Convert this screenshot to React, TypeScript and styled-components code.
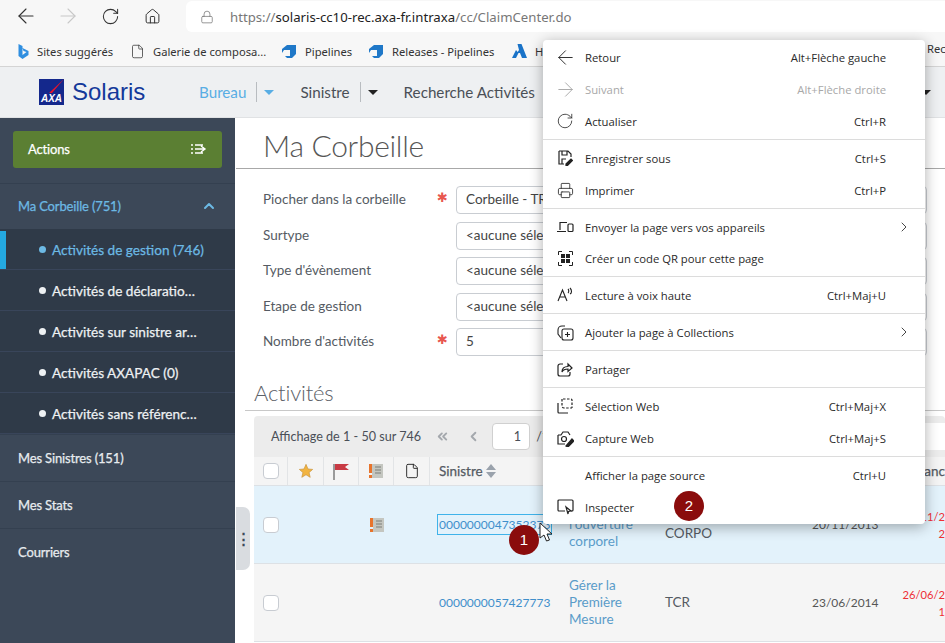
import React from 'react';
import styled, { createGlobalStyle } from 'styled-components';
import { ArrowLeft, ArrowRight, RotateCw, Home, Lock, ChevronUp, ChevronRight, ChevronsLeft, ChevronLeft, File, Printer } from 'lucide-react';

const GlobalStyle = createGlobalStyle`
  html, body { margin: 0; padding: 0; height: 643px; overflow: hidden; background: #fff; }
  * { box-sizing: border-box; }
`;

const Page = styled.div`
  position: relative;
  width: 945px;
  height: 643px;
  overflow: hidden;
  font-family: "Noto Sans", sans-serif;
`;

const Toolbar = styled.div`
  height: 36px;
  background: #f7f7f7;
  display: flex;
  align-items: flex-start;
  padding-left: 5px;
  color: #222;
`;

const ToolButton = styled.div<{ $off?: boolean }>`
  width: 42px;
  height: 32px;
  display: flex;
  align-items: center;
  justify-content: center;
  color: ${p => (p.$off ? '#c8c8c8' : '#333')};
`;

const Address = styled.div`
  flex: 1;
  margin: 1px 0 0 13px;
  height: 31px;
  background: #fff;
  border-radius: 6px 0 0 6px;
  display: flex;
  align-items: center;
  gap: 16px;
  padding-left: 14px;
  font-size: 13.2px;
  color: #777;
`;

const Strong = styled.span`
  color: #222;
`;

const Bookmarks = styled.div`
  height: 31px;
  background: #f7f7f7;
  border-bottom: 1px solid #d4d4d4;
  display: flex;
  align-items: center;
  padding-left: 16px;
  font-size: 11.2px;
  color: #333;
  white-space: nowrap;
`;

const Bookmark = styled.div<{ $w: number }>`
  width: ${p => p.$w}px;
  display: flex;
  align-items: center;
  gap: 8px;
`;

const TopNav = styled.div`
  height: 51px;
  background: #eef0f2;
  border-bottom: 1px solid #e0e2e4;
  display: flex;
  align-items: center;
  padding-left: 39px;
`;

const Logo = styled.div`
  width: 160px;
  display: flex;
  align-items: center;
  font-family: "Liberation Sans", sans-serif;
  font-size: 24px;
  color: #14399a;
  gap: 8px;
`;

const NavItem = styled.div<{ $active?: boolean }>`
  font-family: "Lato", sans-serif;
  font-size: 15.2px;
  color: ${p => (p.$active ? '#58ade4' : '#4a4f57')};
  display: flex;
  align-items: center;
`;

const NavCaret = styled.div<{ $active?: boolean }>`
  margin: 0 26px 0 10px;
  padding-left: 7px;
  height: 20px;
  border-left: 1px solid #b8bcc0;
  display: flex;
  align-items: center;
  &::after {
    content: '';
    border-left: 5px solid transparent;
    border-right: 5px solid transparent;
    border-top: 5px solid ${p => (p.$active ? '#58ade4' : '#222')};
  }
`;

const NavEndCaret = styled.div`
  margin: 0 14px 0 auto;
  border-left: 5px solid transparent;
  border-right: 5px solid transparent;
  border-top: 5px solid #222;
`;

const Body = styled.div`
  height: 525px;
  display: flex;
`;

const Sidebar = styled.aside`
  width: 235px;
  background: #3c4858;
  color: #e8ecef;
  font-family: "Lato", sans-serif;
  font-size: 13px;
  letter-spacing: -0.15px;
  -webkit-text-stroke: 0.25px currentColor;
  flex-shrink: 0;
  padding-top: 13px;
`;

const ActionButton = styled.div`
  margin: 0 13px 15px;
  height: 37px;
  border-radius: 3px;
  background: #5b7f33;
  color: #fff;
  display: flex;
  align-items: center;
  justify-content: space-between;
  padding: 0 15px 1px;
  font-size: 13px;
`;

const SideSection = styled.div<{ $open?: boolean }>`
  height: ${p => (p.$open ? '46px' : '47px')};
  padding: ${p => (p.$open ? '0 18px 2px' : '0 18px')};
  display: flex;
  align-items: center;
  justify-content: space-between;
  border-top: 1px solid #344050;
  color: ${p => (p.$open ? '#6cb9e4' : '#e8ecef')};
`;

const SubList = styled.div`
  background: #2f3a48;
`;

const SubItem = styled.div<{ $active?: boolean }>`
  height: 41px;
  position: relative;
  display: flex;
  align-items: center;
  gap: 6px;
  padding: 1px 0 0 39px;
  border-bottom: 1px solid #39455a;
  color: ${p => (p.$active ? '#6cb9e4' : '#eef1f3')};
  font-size: 13.6px;
  letter-spacing: 0;
  &::before {
    content: '';
    width: 7px;
    height: 7px;
    border-radius: 50%;
    background: currentColor;
  }
  &::after {
    content: '';
    display: ${p => (p.$active ? 'block' : 'none')};
    position: absolute;
    left: 0;
    top: 2px;
    bottom: 0;
    width: 6px;
    background: #24a9e1;
  }
`;

const Splitter = styled.div`
  width: 19px;
  flex-shrink: 0;
  position: relative;
`;

const Handle = styled.div`
  position: absolute;
  left: 1px;
  top: 389px;
  width: 14px;
  height: 63px;
  background: #d9dce0;
  border-radius: 0 7px 7px 0;
  color: #3c4858;
  font-size: 15px;
  line-height: 63px;
  text-align: center;
  font-weight: 700;
`;

const Main = styled.main`
  flex: 1;
  min-width: 0;
  font-family: "Lato", sans-serif;
  font-size: 13.5px;
  color: #555b63;
`;

const PageTitle = styled.div`
  height: 51px;
  margin-left: -18px;
  padding-left: 27px;
  border-bottom: 1px solid #a8a8a8;
  font-size: 30px;
  letter-spacing: -0.3px;
  font-weight: 300;
  line-height: 54px;
  color: #565656;
`;

const Form = styled.div`
  padding: 17px 0 0 9px;
  display: grid;
  row-gap: 7.5px;
`;

const FormRow = styled.div`
  display: grid;
  grid-template-columns: 170px 23px 471px;
  align-items: center;
  height: 28px;
`;

const FormLabel = styled.span`
  padding-bottom: 2px;
`;

const Required = styled.span`
  padding-left: 4px;
  color: #e8574f;
  font-family: "DejaVu Sans", sans-serif;
  font-size: 13px;
  line-height: 14px;
  margin-top: -4px;
`;

const Field = styled.div`
  height: 28px;
  border: 1px solid #c9cdd2;
  border-radius: 4px;
  padding-left: 9px;
  line-height: 25px;
  color: #444;
  background: #fff;
`;

const SectionTitle = styled.div`
  margin: 22px 0 0 -9px;
  height: 33px;
  border-bottom: 1px solid #c8c8c8;
  padding-left: 9px;
  font-size: 22px;
  letter-spacing: -0.2px;
  font-weight: 300;
  line-height: 30px;
  color: #5c6168;
`;

const TableWrap = styled.div`
  margin-top: 5px;
`;

const Pager = styled.div`
  height: 41px;
  background: #ececec;
  border-radius: 4px 4px 0 0;
  display: flex;
  align-items: center;
  padding-left: 17px;
  font-size: 12.6px;
  color: #4a4f57;
  gap: 14px;
`;

const PageIcons = styled.div`
  display: flex;
  align-items: center;
  gap: 16px;
  color: #a4a8ad;
`;

const PageInput = styled.div`
  width: 38px;
  height: 27px;
  margin-left: -3px;
  background: #fff;
  border: 1px solid #d0d0d0;
  border-radius: 4px;
  text-align: right;
  padding-right: 8px;
  line-height: 25px;
`;

const PageTotal = styled.span`
  margin-left: -8px;
`;

const PagerFill = styled.div`
  flex: 1;
  height: 27px;
  background: #fff;
`;

const GridRow = styled.div<{ $bg: string; $h: number }>`
  display: grid;
  grid-template-columns: 34px 36px 35px 35px 36px 130px 96px 147px 90px 52px;
  height: ${p => p.$h}px;
  background: ${p => p.$bg};
  border-bottom: 1px solid #dde1e5;
  align-items: center;
`;

const Cell = styled.div<{ $head?: boolean; $center?: boolean }>`
  height: ${p => (p.$head ? '100%' : 'auto')};
  display: flex;
  align-items: center;
  padding-left: ${p => (p.$center ? 0 : '9px')};
  justify-content: ${p => (p.$center ? 'center' : 'flex-start')};
  border-right: ${p => (p.$head ? '1px solid #e2e4e6' : 'none')};
  -webkit-text-stroke: ${p => (p.$head ? '0.25px currentColor' : '0')};
  line-height: 17px;
`;

const HeadEnd = styled.div`
  text-align: right;
  -webkit-text-stroke: 0.25px currentColor;
  white-space: nowrap;
`;

const Check = styled.div`
  width: 16px;
  height: 16px;
  background: #fff;
  border: 1px solid #c8ccd2;
  border-radius: 4px;
`;

const ClaimLink = styled.span<{ $focus?: boolean }>`
  color: #3f8fcb;
  font-size: 12px;
  outline: ${p => (p.$focus ? '1.5px solid #3fb3ea' : 'none')};
  outline-offset: 1px;
`;

const TaskLink = styled.span`
  color: #5a9cc9;
`;

const DateText = styled.span`
  color: #555;
  font-size: 12px;
`;

const RedDate = styled.div`
  color: #ee2f35;
  font-size: 11.2px;
  text-align: right;
  white-space: nowrap;
  line-height: 17px;
`;

const Menu = styled.div`
  position: absolute;
  left: 543px;
  top: 40px;
  width: 382px;
  height: 484px;
  background: #fff;
  border-radius: 4px;
  box-shadow: 0 3px 14px rgba(0, 0, 0, 0.32);
  padding-top: 1px;
  font-family: "Open Sans", sans-serif;
  font-size: 11.3px;
  color: #2a2a2a;
`;

const MenuRow = styled.div<{ $off?: boolean; $h?: number; $sub?: boolean }>`
  height: ${p => p.$h ?? 32}px;
  display: grid;
  grid-template-columns: 42px 1fr auto;
  align-items: center;
  padding-right: ${p => (p.$sub ? '13px' : '39px')};
  color: ${p => (p.$off ? '#a8a8a8' : '#2a2a2a')};
`;

const MenuIcon = styled.div`
  display: flex;
  justify-content: center;
  padding-left: 2px;
`;

const Divider = styled.div`
  height: 1px;
  margin: 2px 0;
  background: #dcdcdc;
`;

const Badge = styled.div<{ $x: number; $y: number }>`
  position: absolute;
  left: ${p => p.$x}px;
  top: ${p => p.$y}px;
  width: 30px;
  height: 30px;
  border-radius: 50%;
  background: #8a0c0c;
  color: #fff;
  text-align: center;
  line-height: 30px;
  font-family: "Liberation Sans", sans-serif;
  font-size: 15px;
`;

const Cursor = styled.svg`
  position: absolute;
  left: 539px;
  top: 522px;
`;

const Peek = styled.div`
  position: absolute;
  left: 927px;
  top: 41px;
  font-size: 11.2px;
  color: #333;
`;

const AxaLogo = () => (
  <svg width="25" height="26" viewBox="0 0 25 26">
    <rect width="25" height="26" fill="#14288c" />
    <path d="M25 0 L13 14 L10 14 Z" fill="#e8142c" />
    <text x="12.5" y="23" textAnchor="middle" fontFamily="Liberation Sans" fontWeight="700" fontStyle="italic" fontSize="10" fill="#fff">AXA</text>
  </svg>
);

const EdgeIcon = () => (
  <svg width="13" height="15" viewBox="0 0 12 15">
    <path d="M2 0 L6 2 L6 11 L10 8 L7 7 L6 4 L12 7 L12 11 L6 15 L2 12 Z" fill="#2f8ee0" />
  </svg>
);

const PipelineIcon = () => (
  <svg width="16" height="15" viewBox="0 0 16 15">
    <path d="M6 1 H15 V10 L11 14 H6 L4 12 H9 V6 H3 L1 9 V5 Z" fill="#1f78c8" />
  </svg>
);

const AzureIcon = () => (
  <svg width="15" height="14" viewBox="0 0 15 14">
    <path d="M5.500 0H9.500L15 14H10L8 9H5L7 6zM0 14L4 6 6.500 9 4 14z" fill="#1a73c8" />
  </svg>
);

const SideMenuIcon = () => (
  <svg width="16" height="12" viewBox="0 0 16 12" fill="none" stroke="#fff" strokeWidth="1.4">
    <path d="M0 2h2M0 6h2M0 10h2M4 2h8M4 10h8M4 6h10M10 3l4 3-4 3" />
  </svg>
);

const TaskIcon = () => (
  <svg width="14" height="16" viewBox="0 0 14 16">
    <rect x="3" y="1" width="11" height="14" fill="#c4c6c0" />
    <path d="M6 4h6M6 7h6M6 10h6" stroke="#7d7f78" />
    <rect x="0" y="1" width="3" height="9" fill="#e8742c" />
    <rect x="0" y="12" width="3" height="3" fill="#e8742c" />
  </svg>
);

const Star = () => (
  <svg width="16" height="16" viewBox="0 0 24 24" fill="#f2b440" stroke="#c8923a">
    <path d="M12 2l3 7 7 .6-5.400 4.700 1.700 7.200L12 17.600 5.700 21.500l1.700-7.200L2 9.600 9 9z" />
  </svg>
);

const Flag = () => (
  <svg width="17" height="17" viewBox="0 0 17 17">
    <rect x="0" y="1" width="2" height="16" fill="#9a9a9a" />
    <path d="M2 1 H16 L12 4 L16 7 H2 Z" fill="#c83a44" />
  </svg>
);

const SortIcon = () => (
  <svg width="10" height="14" viewBox="0 0 10 14" fill="#9aa2ac">
    <path d="M5 0l5 6H0zM5 14L0 8h10z" />
  </svg>
);

const SaveIcon = () => (
  <svg width="16" height="16" viewBox="0 0 16 16" fill="none" stroke="#222" strokeWidth="1.2">
    <path d="M2 1h9l3 3v3M2 1v13h5M5 1v4h5V1M5 14V9h4" />
    <path d="M9 14l5-5 1.500 1.500-5 5H9z" fill="#222" />
  </svg>
);

const SendIcon = () => (
  <svg width="17" height="14" viewBox="0 0 17 14" fill="none" stroke="#222" strokeWidth="1.200">
    <path d="M3 10V2.500h7M0 11.500h9" />
    <rect x="11" y="4" width="5" height="7.500" rx="1" />
  </svg>
);

const QrIcon = () => (
  <svg width="15" height="15" viewBox="0 0 15 15" fill="none" stroke="#222" strokeWidth="1">
    <path d="M.5 4V.5H4M11 .5h3.500V4M.5 11v3.500H4M11 14.500h3.500V11" />
    <g fill="#222" stroke="none">
      <rect x="3" y="3" width="4" height="4" />
      <rect x="8" y="3" width="4" height="4" />
      <rect x="3" y="8" width="4" height="4" />
      <rect x="8" y="8" width="4" height="4" />
    </g>
  </svg>
);

const ReadIcon = () => (
  <svg width="16" height="16" viewBox="0 0 16 16" fill="none" stroke="#222" strokeWidth="1.1">
    <path d="M1 14L5.500 3 10 14M3 10h5M11 2c1 1 1 3 0 4M13 1c2 2 2 5 0 6" />
  </svg>
);

const CollectionIcon = () => (
  <svg width="17" height="17" viewBox="0 0 17 17" fill="none" stroke="#222" strokeWidth="1.1">
    <rect x="5" y="5" width="11" height="11" rx="2" />
    <path d="M8 2H5a4 4 0 0 0-4 4v4l3 4M10.500 8v5M8 10.500h5" />
  </svg>
);

const ShareIcon = () => (
  <svg width="16" height="15" viewBox="0 0 16 15" fill="none" stroke="#222" strokeWidth="1.200">
    <path d="M6 2H3a2 2 0 0 0-2 2v8a2 2 0 0 0 2 2h8a2 2 0 0 0 2-2v-2" />
    <path d="M5 10c0-4 3-5.500 6-5.500V2l4 4-4 3.500V7c-3 0-5 1-6 3z" />
  </svg>
);

const WebCaptureIcon = () => (
  <svg width="16" height="16" viewBox="0 0 16 16" fill="none" stroke="#222" strokeWidth="1.2">
    <path d="M6 1h8a1 1 0 0 1 1 1v8" strokeDasharray="2.500 1.500" />
    <path d="M1 5v9a1 1 0 0 0 1 1h9" />
    <path d="M5 1v7a2 2 0 0 0 2 2h8" strokeDasharray="2.500 1.500" />
  </svg>
);

const CameraPen = () => (
  <svg width="17" height="17" viewBox="0 0 17 17" fill="none" stroke="#222" strokeWidth="1.200">
    <path d="M1 5h3l2-3h5l2 3M1 5v9h7" />
    <circle cx="7" cy="9" r="2.500" />
    <path d="M9 16l6-7 2 2-6 6z" fill="#222" />
  </svg>
);

const InspectIcon = () => (
  <svg width="17" height="16" viewBox="0 0 17 16" fill="none" stroke="#222" strokeWidth="1.200">
    <path d="M8 12H2a1 1 0 0 1-1-1V2a1 1 0 0 1 1-1h13a1 1 0 0 1 1 1v9a1 1 0 0 1-1 1h-1" />
    <path d="M9 8l5 4-2.500.500L11 15z" />
  </svg>
);

const sideItems = ['Activités de gestion (746)', 'Activités de déclaratio…', 'Activités sur sinistre ar…', 'Activités AXAPAC (0)', 'Activités sans référenc…'];
const formRows = [
  { label: 'Piocher dans la corbeille', value: 'Corbeille - TR', required: true },
  { label: 'Surtype', value: '<aucune sélection>' },
  { label: "Type d'évènement", value: '<aucune sélection>' },
  { label: 'Etape de gestion', value: '<aucune sélection>' },
  { label: "Nombre d'activités", value: '5', required: true },
];

export default function App() {
  return (
    <Page>
      <GlobalStyle />
      <Toolbar>
        <ToolButton><ArrowLeft size={24} strokeWidth={1.1} /></ToolButton>
        <ToolButton $off><ArrowRight size={24} strokeWidth={1.1} /></ToolButton>
        <ToolButton><RotateCw size={19} strokeWidth={1.3} /></ToolButton>
        <ToolButton><Home size={17} strokeWidth={1.4} /></ToolButton>
        <Address>
          <Lock size={14} strokeWidth={1.3} />
          <span>https://<Strong>solaris-cc10-rec.axa-fr.intraxa</Strong>/cc/ClaimCenter.do</span>
        </Address>
      </Toolbar>
      <Bookmarks>
        <Bookmark $w={114}><EdgeIcon />Sites suggérés</Bookmark>
        <Bookmark $w={151}><File size={15} strokeWidth={1.2} />Galerie de composa...</Bookmark>
        <Bookmark $w={87}><PipelineIcon />Pipelines</Bookmark>
        <Bookmark $w={144}><PipelineIcon />Releases - Pipelines</Bookmark>
        <Bookmark $w={40}><AzureIcon />H</Bookmark>
      </Bookmarks>
      <TopNav>
        <Logo><AxaLogo />Solaris</Logo>
        <NavItem $active>Bureau</NavItem>
        <NavCaret $active />
        <NavItem>Sinistre</NavItem>
        <NavCaret />
        <NavItem>Recherche Activités</NavItem>
        <NavEndCaret />
      </TopNav>
      <Body>
        <Sidebar>
          <ActionButton>Actions <SideMenuIcon /></ActionButton>
          <SideSection $open>Ma Corbeille (751)<ChevronUp size={16} strokeWidth={3} /></SideSection>
          <SubList>
            {sideItems.map((item, i) => (
              <SubItem key={item} $active={i === 0}>{item}</SubItem>
            ))}
          </SubList>
          <SideSection>Mes Sinistres (151)</SideSection>
          <SideSection>Mes Stats</SideSection>
          <SideSection>Courriers</SideSection>
        </Sidebar>
        <Splitter><Handle>⋮</Handle></Splitter>
        <Main>
          <PageTitle>Ma Corbeille</PageTitle>
          <Form>
            {formRows.map(row => (
              <FormRow key={row.label}>
                <FormLabel>{row.label}</FormLabel>
                <Required>{row.required ? '✱' : ''}</Required>
                <Field>{row.value}</Field>
              </FormRow>
            ))}
          </Form>
          <SectionTitle>Activités</SectionTitle>
          <TableWrap>
            <Pager>
              Affichage de 1 - 50 sur 746
              <PageIcons>
                <ChevronsLeft size={15} strokeWidth={3} />
                <ChevronLeft size={15} strokeWidth={3} />
              </PageIcons>
              <PageInput>1</PageInput>
              <PageTotal>/1</PageTotal>
              <PagerFill />
            </Pager>
            <GridRow $bg="#f4f4f4" $h={29}>
              <Cell $head $center><Check /></Cell>
              <Cell $head $center><Star /></Cell>
              <Cell $head $center><Flag /></Cell>
              <Cell $head $center><TaskIcon /></Cell>
              <Cell $head $center><File size={16} strokeWidth={1.4} color="#222" /></Cell>
              <Cell $head>Sinistre&nbsp;<SortIcon /></Cell>
              <div />
              <div />
              <div />
              <HeadEnd>anc</HeadEnd>
            </GridRow>
            <GridRow $bg="#e3f2fb" $h={78}>
              <Cell $center><Check /></Cell>
              <Cell />
              <Cell />
              <Cell $center><TaskIcon /></Cell>
              <Cell />
              <Cell><ClaimLink $focus>0000000047352373</ClaimLink></Cell>
              <Cell><TaskLink>Gérer l'ouverture corporel</TaskLink></Cell>
              <Cell>TCR<br />CORPO</Cell>
              <Cell><DateText>20/11/2013</DateText></Cell>
              <RedDate>11/2<br />2</RedDate>
            </GridRow>
            <GridRow $bg="#f5f5f5" $h={78}>
              <Cell $center><Check /></Cell>
              <Cell />
              <Cell />
              <Cell />
              <Cell />
              <Cell><ClaimLink>0000000057427773</ClaimLink></Cell>
              <Cell><TaskLink>Gérer la Première Mesure</TaskLink></Cell>
              <Cell>TCR</Cell>
              <Cell><DateText>23/06/2014</DateText></Cell>
              <RedDate>26/06/2<br />1</RedDate>
            </GridRow>
          </TableWrap>
        </Main>
      </Body>
      <Peek>Rec</Peek>
      <Menu>
        <MenuRow><MenuIcon><ArrowLeft size={23} strokeWidth={1} /></MenuIcon>Retour<span>Alt+Flèche gauche</span></MenuRow>
        <MenuRow $off><MenuIcon><ArrowRight size={23} strokeWidth={1} /></MenuIcon>Suivant<span>Alt+Flèche droite</span></MenuRow>
        <MenuRow><MenuIcon><RotateCw size={18} strokeWidth={1.1} /></MenuIcon>Actualiser<span>Ctrl+R</span></MenuRow>
        <Divider />
        <MenuRow><MenuIcon><SaveIcon /></MenuIcon>Enregistrer sous<span>Ctrl+S</span></MenuRow>
        <MenuRow><MenuIcon><Printer size={17} strokeWidth={1.2} /></MenuIcon>Imprimer<span>Ctrl+P</span></MenuRow>
        <Divider />
        <MenuRow $sub><MenuIcon><SendIcon /></MenuIcon>Envoyer la page vers vos appareils<ChevronRight size={16} strokeWidth={1.3} /></MenuRow>
        <MenuRow $h={31}><MenuIcon><QrIcon /></MenuIcon>Créer un code QR pour cette page<span /></MenuRow>
        <Divider />
        <MenuRow><MenuIcon><ReadIcon /></MenuIcon>Lecture à voix haute<span>Ctrl+Maj+U</span></MenuRow>
        <Divider />
        <MenuRow $sub><MenuIcon><CollectionIcon /></MenuIcon>Ajouter la page à Collections<ChevronRight size={16} strokeWidth={1.3} /></MenuRow>
        <Divider />
        <MenuRow><MenuIcon><ShareIcon /></MenuIcon>Partager<span /></MenuRow>
        <Divider />
        <MenuRow><MenuIcon><WebCaptureIcon /></MenuIcon>Sélection Web<span>Ctrl+Maj+X</span></MenuRow>
        <MenuRow><MenuIcon><CameraPen /></MenuIcon>Capture Web<span>Ctrl+Maj+S</span></MenuRow>
        <Divider />
        <MenuRow><MenuIcon />Afficher la page source<span>Ctrl+U</span></MenuRow>
        <MenuRow><MenuIcon><InspectIcon /></MenuIcon>Inspecter<span /></MenuRow>
      </Menu>
      <Badge $x={509} $y={525}>1</Badge>
      <Badge $x={674} $y={491}>2</Badge>
      <Cursor width="14" height="20" viewBox="0 0 14 20">
        <path d="M1 1v15l4-3 2.500 6 3-1-2.500-6h5z" fill="#fff" stroke="#222" />
      </Cursor>
    </Page>
  );
}
